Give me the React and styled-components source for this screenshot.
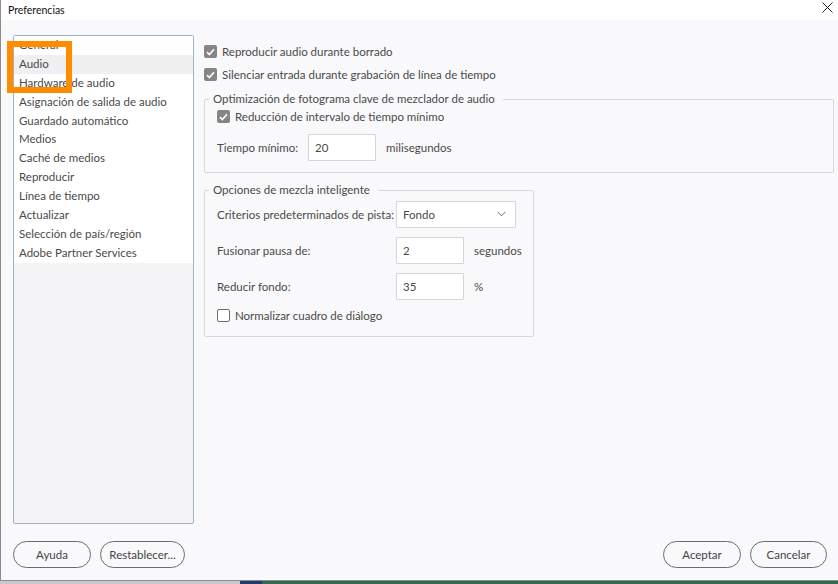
import styled, { createGlobalStyle } from 'styled-components'

const GlobalStyle = createGlobalStyle`
  html, body {
    margin: 0;
    padding: 0;
    background: #ffffff;
  }
  body {
    font-family: Lato, 'Noto Sans', sans-serif;
    font-size: 11.5px;
    color: #4a4a4a;
  }
  * {
    box-sizing: border-box;
  }
`

const Window = styled.div`
  width: 838px;
  height: 581px;
  display: flex;
  flex-direction: column;
  border-left: 1px solid #8c8c8c;
  border-bottom: 1px solid #8c8c8c;
  background: #f9f8fa;
`

const TitleBar = styled.div`
  height: 20px;
  display: flex;
  align-items: center;
  justify-content: space-between;
  padding: 0 5px 0 7px;
  background: #ffffff;
  color: #111;
  font-size: 10.5px;
`

const CloseIcon = styled.svg`
  display: block;
  align-self: flex-start;
  margin-top: 2px;
`

const Body = styled.div`
  flex: 1;
  display: flex;
  flex-direction: column;
  padding: 15px 4px 12px 12px;
`

const Main = styled.div`
  display: flex;
  gap: 10px;
  height: 489px;
`

const CategoryList = styled.ul`
  position: relative;
  list-style: none;
  margin: 0;
  padding: 0;
  width: 181px;
  flex-shrink: 0;
  border: 1px solid #9fb2c7;
  border-radius: 2px;
  background: #f4f3f5;
`

const Category = styled.li`
  height: 18.9px;
  line-height: 18.9px;
  padding-left: 5px;
  background: ${p => (p.$selected ? '#f0eff2' : '#ffffff')};
  white-space: nowrap;
`

const Highlight = styled.div`
  position: absolute;
  left: -7px;
  top: 5px;
  width: 65px;
  height: 52px;
  border: 6px solid #ff8c00;
  pointer-events: none;
`

const Settings = styled.div`
  flex: 1;
  display: flex;
  flex-direction: column;
  padding-top: 5px;
`

const CheckRow = styled.label`
  display: flex;
  align-items: center;
  gap: 5px;
  height: 23px;
  white-space: nowrap;
`

const Box = styled.span`
  width: 13px;
  height: 13px;
  border-radius: 2px;
  display: inline-flex;
  align-items: center;
  justify-content: center;
  flex-shrink: 0;
  background: ${p => (p.$checked ? '#858585' : '#ffffff')};
  border: ${p => (p.$checked ? 'none' : '1.5px solid #6f6f6f')};
`

const Group = styled.fieldset`
  margin: 0;
  padding: 0 12px ${p => p.$bottom || '0'} 12px;
  border: 1px solid #d9d8db;
  border-radius: 2px;
  width: ${p => p.$width || 'auto'};
  min-width: 0;
`

const Legend = styled.legend`
  padding: 0 8px 0 4px;
  margin-left: -8px;
  line-height: 12px;
  white-space: nowrap;
`

const FieldRow = styled.div`
  display: flex;
  align-items: center;
  height: ${p => p.$height || '36px'};
`

const FieldLabel = styled.span`
  width: ${p => p.$width};
  flex-shrink: 0;
  white-space: nowrap;
`

const Input = styled.div`
  width: ${p => p.$width || '68px'};
  height: 27px;
  display: flex;
  align-items: center;
  justify-content: space-between;
  padding: 0 9px 0 6px;
  background: #ffffff;
  border: 1px solid #d6d6d8;
  border-radius: 1px;
  flex-shrink: 0;
`

const Unit = styled.span`
  margin-left: 10px;
  white-space: nowrap;
`

const Footer = styled.div`
  margin-top: auto;
  display: flex;
  justify-content: space-between;
  padding-right: 7px;
`

const ButtonGroup = styled.div`
  display: flex;
  gap: 9px;
`

const Button = styled.button`
  width: ${p => p.$width};
  height: 27px;
  border: 1px solid #6c6c6c;
  border-radius: 14px;
  background: transparent;
  font-family: inherit;
  font-size: 11.5px;
  color: #444;
  padding: 0;
`

const Taskbar = styled.div`
  height: 3px;
  display: flex;
`

const TaskSegment = styled.div`
  width: ${p => p.$width};
  flex: ${p => (p.$grow ? 1 : 'none')};
  background: ${p => p.$color};
`

const categories = [
  'General',
  'Audio',
  'Hardware de audio',
  'Asignación de salida de audio',
  'Guardado automático',
  'Medios',
  'Caché de medios',
  'Reproducir',
  'Línea de tiempo',
  'Actualizar',
  'Selección de país/región',
  'Adobe Partner Services'
]

const Check = ({ checked }) => (
  <Box $checked={checked}>
    {checked && (
      <svg width='9' height='8' viewBox='0 0 9 8'>
        <path d='M1 4.2 L3.4 6.5 L8 1.3' fill='none' stroke='#ffffff' strokeWidth='1.6' />
      </svg>
    )}
  </Box>
)

export default function App() {
  return (
    <>
      <GlobalStyle />
      <Window>
        <TitleBar>
          <span>Preferencias</span>
          <CloseIcon width='11' height='11' viewBox='0 0 11 11'>
            <path d='M0.5 0.5 L10.5 10.5 M10.5 0.5 L0.5 10.5' stroke='#222' strokeWidth='1' />
          </CloseIcon>
        </TitleBar>
        <Body>
          <Main>
            <CategoryList>
              {categories.map(name => (
                <Category key={name} $selected={name === 'Audio'}>
                  {name}
                </Category>
              ))}
              <Highlight />
            </CategoryList>
            <Settings>
              <CheckRow>
                <Check checked />
                Reproducir audio durante borrado
              </CheckRow>
              <CheckRow>
                <Check checked />
                Silenciar entrada durante grabación de línea de tiempo
              </CheckRow>
              <Group $bottom='5px' style={{ marginTop: 7 }}>
                <Legend>Optimización de fotograma clave de mezclador de audio</Legend>
                <CheckRow>
                  <Check checked />
                  Reducción de intervalo de tiempo mínimo
                </CheckRow>
                <FieldRow $height='39px'>
                  <FieldLabel $width='91px'>Tiempo mínimo:</FieldLabel>
                  <Input>20</Input>
                  <Unit>milisegundos</Unit>
                </FieldRow>
              </Group>
              <Group $width='330px' $bottom='9px' style={{ marginTop: 11 }}>
                <Legend>Opciones de mezcla inteligente</Legend>
                <FieldRow>
                  <FieldLabel $width='179px'>Criterios predeterminados de pista:</FieldLabel>
                  <Input $width='120px'>
                    Fondo
                    <svg width='9' height='6' viewBox='0 0 9 6'>
                      <path d='M0.5 0.8 L4.5 4.8 L8.5 0.8' fill='none' stroke='#6a6a6a' strokeWidth='1' />
                    </svg>
                  </Input>
                </FieldRow>
                <FieldRow>
                  <FieldLabel $width='179px'>Fusionar pausa de:</FieldLabel>
                  <Input>2</Input>
                  <Unit>segundos</Unit>
                </FieldRow>
                <FieldRow>
                  <FieldLabel $width='179px'>Reducir fondo:</FieldLabel>
                  <Input>35</Input>
                  <Unit>%</Unit>
                </FieldRow>
                <CheckRow>
                  <Check />
                  Normalizar cuadro de diálogo
                </CheckRow>
              </Group>
            </Settings>
          </Main>
          <Footer>
            <ButtonGroup>
              <Button $width='78px'>Ayuda</Button>
              <Button $width='85px'>Restablecer...</Button>
            </ButtonGroup>
            <ButtonGroup>
              <Button $width='78px'>Aceptar</Button>
              <Button $width='77px'>Cancelar</Button>
            </ButtonGroup>
          </Footer>
        </Body>
      </Window>
      <Taskbar>
        <TaskSegment $width='240px' $color='#c9c9cc' />
        <TaskSegment $width='22px' $color='#1f3b73' />
        <TaskSegment $grow $color='#2f6b4f' />
      </Taskbar>
    </>
  )
}
